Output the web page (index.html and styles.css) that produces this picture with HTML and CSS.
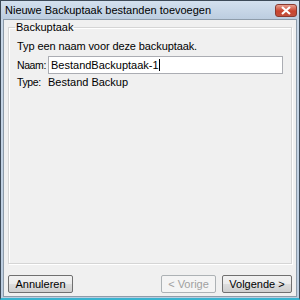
FILE: index.html
```html
<!DOCTYPE html>
<html>
<head>
<meta charset="utf-8">
<link rel="stylesheet" href="styles.css">
</head>
<body>
<div class="window">
  <div class="titlebar">
    <span class="title">Nieuwe Backuptaak bestanden toevoegen</span>
    <span class="close"><svg width="12" height="9" viewBox="0 0 12 9"><path d="M2 1 L10 8 M10 1 L2 8" stroke="#fff" stroke-width="2.2"/></svg></span>
  </div>
  <div class="client">
    <fieldset class="group">
      <legend>Backuptaak</legend>
      <p class="intro">Typ een naam voor deze backuptaak.</p>
      <div class="row">
        <span class="label">Naam:</span>
        <div class="input">BestandBackuptaak-1<span class="caret"></span></div>
      </div>
      <div class="row">
        <span class="label">Type:</span>
        <span class="value">Bestand Backup</span>
      </div>
    </fieldset>
    <div class="buttons">
      <button class="btn">Annuleren</button>
      <span class="spacer"></span>
      <button class="btn prev" disabled>&lt; Vorige</button>
      <button class="btn next">Volgende &gt;</button>
    </div>
  </div>
</div>
</body>
</html>
```

FILE: styles.css
```css
html, body {
  margin: 0;
  padding: 0;
  width: 300px;
  height: 300px;
  overflow: hidden;
  background: #fff;
}
.window {
  box-sizing: border-box;
  width: 300px;
  height: 300px;
  border: 1px solid #3d4a58;
  border-bottom: 2px solid #39b4d0;
  background: linear-gradient(#c9d8e8, #bccde0);
  display: flex;
  flex-direction: column;
  font-family: "Liberation Sans", Arial, sans-serif;
  font-size: 11px;
  color: #000;
}
.titlebar {
  height: 18px;
  display: flex;
  align-items: center;
  padding: 0 2px 0 4px;
  background: linear-gradient(#d3e0ee, #bccde0);
}
.title {
  flex: 1;
  font-size: 11px;
  color: #000;
}
.close {
  width: 22px;
  height: 13px;
  margin-top: 1px;
  border: 1px solid #8a3a30;
  border-radius: 3px;
  background: linear-gradient(#e8a090, #c9442f 55%, #c2503c);
  display: flex;
  align-items: center;
  justify-content: center;
  box-sizing: border-box;
}
.client {
  flex: 1;
  margin: 0 2px 1px 2px;
  border: 1px solid #8e9caa;
  background: #f0f0f0;
  display: flex;
  flex-direction: column;
  padding: 0 4px 0 4px;
}
.group {
  flex: 1;
  margin: 1px 0 0 0;
  padding: 2px 8px 0 8px;
  border: 1px solid #d5d5d5;
  border-radius: 0;
  box-shadow: inset 1px 1px 0 #fff, 1px 1px 0 #fff;
}
.group legend {
  padding: 0 1px;
  margin-left: -2px;
  font-size: 11px;
}
.intro {
  margin: 5px 0 4px 0;
  letter-spacing: -0.1px;
}
.row {
  display: flex;
  align-items: center;
  margin-bottom: 2px;
}
.label {
  width: 31px;
  font-size: 10.5px;
  letter-spacing: -0.4px;
}
.input {
  flex: 1;
  height: 16px;
  border: 1px solid #abadb3;
  background: #fff;
  line-height: 16px;
  padding-left: 2px;
  margin-right: 0;
}
.caret {
  display: inline-block;
  width: 1px;
  height: 12px;
  background: #000;
  vertical-align: -2px;
}
.value {
  flex: 1;
}
.buttons {
  box-sizing: border-box;
  height: 32px;
  display: flex;
  align-items: flex-start;
  gap: 6px;
  padding-top: 11px;
}
.spacer {
  flex: 1;
}
.btn {
  height: 18px;
  padding: 0;
  border: 1px solid #707070;
  border-radius: 2px;
  background: linear-gradient(#f2f2f2 0%, #ebebeb 50%, #dddddd 51%, #cfcfcf 100%);
  font-family: "Liberation Sans", Arial, sans-serif;
  font-size: 11px;
  color: #000;
  box-sizing: border-box;
}
.btn:first-child { width: 65px; }
.prev {
  width: 55px;
  color: #a0a0a0;
  border-color: #adb2b5;
  background: #f4f4f4;
}
.next { width: 70px; }
```
